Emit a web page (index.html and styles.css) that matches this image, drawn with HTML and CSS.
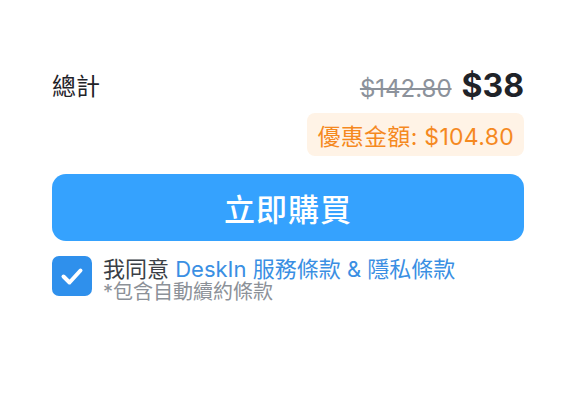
FILE: index.html
```html
<!DOCTYPE html>
<html lang="zh-Hant">
<head>
<meta charset="utf-8">
<link rel="stylesheet" href="styles.css">
</head>
<body>
<div class="panel">
  <div class="total-row">
    <span class="total-label">總計</span>
    <span class="prices">
      <span class="price-old">$142.80</span>
      <span class="price-new">$38</span>
    </span>
  </div>
  <div class="discount-row">
    <span class="discount">優惠金額: $104.80</span>
  </div>
  <button class="buy-btn" type="button">立即購買</button>
  <div class="agree">
    <span class="checkbox">
      <svg viewBox="0 0 40 40" width="40" height="40"><path d="M11.5 20.5 L17.5 26.5 L28.5 14.5" fill="none" stroke="#fff" stroke-width="4" stroke-linecap="round" stroke-linejoin="round"/></svg>
    </span>
    <div class="agree-text">
      <div class="agree-main">我同意 <span class="link">DeskIn 服務條款</span> <span class="link">&amp; 隱私條款</span></div>
      <div class="agree-note">*包含自動續約條款</div>
    </div>
  </div>
</div>
</body>
</html>
```
FILE: styles.css
```css
* { box-sizing: border-box; }
html, body { margin: 0; padding: 0; background: #fff; }
body {
  font-family: "Inter", "Noto Sans CJK TC", sans-serif;
  color: #1f2329;
  width: 576px;
  height: 400px;
}
.panel {
  padding: 66px 52px 0 52px;
}
.total-row {
  display: flex;
  justify-content: space-between;
  align-items: baseline;
}
.total-label {
  font-size: 24px;
  color: #1f2329;
  position: relative;
  top: -2px;
}
.prices {
  display: flex;
  align-items: baseline;
  gap: 10px;
}
.price-old {
  font-size: 24px;
  color: #8c929b;
  text-decoration: line-through;
  text-decoration-thickness: 2px;
}
.price-new {
  font-size: 32px;
  font-weight: 700;
  color: #1f2329;
}
.discount-row {
  display: flex;
  justify-content: flex-end;
  margin-top: 8px;
}
.discount {
  display: flex;
  align-items: center;
  height: 43px;
  padding: 0 10px;
  background: #fff3e6;
  border-radius: 8px;
  color: #f5891f;
  font-size: 23px;
  letter-spacing: 0.3px;
}
.buy-btn {
  display: flex;
  align-items: center;
  justify-content: center;
  width: 100%;
  height: 67px;
  margin-top: 18px;
  border: none;
  border-radius: 14px;
  background: #35a2fe;
  color: #fff;
  font-family: inherit;
  font-size: 31px;
  font-weight: 500;
  letter-spacing: 1px;
  padding: 0;
}
.agree {
  display: flex;
  align-items: flex-start;
  gap: 11px;
  margin-top: 15px;
}
.checkbox {
  flex: none;
  width: 40px;
  height: 40px;
  border-radius: 7px;
  background: #2f90ec;
  display: flex;
}
.agree-text {
  display: flex;
  flex-direction: column;
}
.agree-main {
  font-size: 22px;
  line-height: 26px;
  color: #3a3f46;
}
.link { color: #3a8fe3; }
.agree-note {
  font-size: 20px;
  line-height: 20px;
  color: #8c9198;
}
```
